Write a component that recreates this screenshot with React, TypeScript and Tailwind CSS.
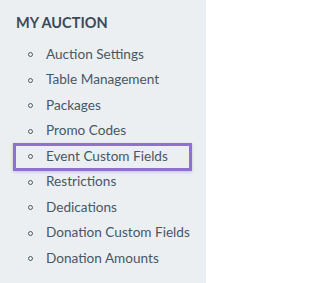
const items = [
  "Auction Settings",
  "Table Management",
  "Packages",
  "Promo Codes",
  "Event Custom Fields",
  "Restrictions",
  "Dedications",
  "Donation Custom Fields",
  "Donation Amounts",
];

const active = "Event Custom Fields";

export default function App() {
  return (
    <div className="w-[206px] h-[283px] bg-[#eceff1] pt-[13px] font-['Lato',sans-serif] text-[#475766] overflow-hidden">
      <h2 className="pl-[16px] text-[14.5px] leading-[20px] font-bold uppercase text-[#3b4a56]">
        My Auction
      </h2>
      <ul className="mt-[9px]">
        {items.map((item) => (
          <li key={item} className="relative flex items-center h-[25.5px] pl-[28px]">
            {item === active && (
              <span className="absolute left-[13px] top-[-1px] w-[179px] h-[28px] border-[3px] border-[#8d70cf] shadow-[0_1px_3px_rgba(0,0,0,0.18)]" />
            )}
            <span className="w-[5px] h-[5px] rounded-full border border-[#4b5b67] shrink-0" />
            <span className="ml-[13px] text-[13.6px] leading-none">{item}</span>
          </li>
        ))}
      </ul>
    </div>
  );
}
